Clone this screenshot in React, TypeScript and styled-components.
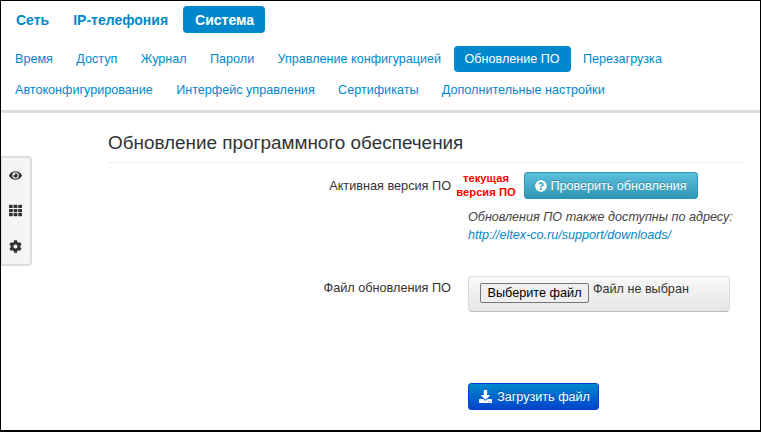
import React from "react";
import styled, { createGlobalStyle } from "styled-components";
import { FaEye, FaTh, FaCog, FaQuestionCircle, FaDownload } from "react-icons/fa";

const GlobalStyle = createGlobalStyle`
  html, body { margin: 0; padding: 0; background: #fff; }
  body { font-family: "Liberation Sans", Arial, sans-serif; font-size: 13px; color: #333; }
`;

const Frame = styled.div`
  width: 761px;
  height: 432px;
  box-sizing: border-box;
  border-style: solid;
  border-color: #000;
  border-width: 1px 1px 2px 1px;
  overflow: hidden;
  display: flex;
  flex-direction: column;
`;

const Header = styled.header`
  height: 112px;
  box-sizing: border-box;
  flex: none;
  border-bottom: 3px solid #ddd;
  padding: 5px 0 0 3px;
`;

const MainNav = styled.nav`
  display: flex;
  height: 27px;
  margin-bottom: 13px;
`;

const MainTab = styled.a<{ $active?: boolean }>`
  display: flex;
  align-items: center;
  padding: 0 ${(p) => (p.$active ? "11px" : "12px")} 0 12px;
  margin-left: ${(p) => (p.$active ? "3px" : "0")};
  border-radius: 4px;
  font-weight: bold;
  font-size: 14px;
  color: ${(p) => (p.$active ? "#fff" : "#0088cc")};
  background: ${(p) => (p.$active ? "#0088cc" : "transparent")};
`;

const SubNav = styled.nav`
  display: flex;
  flex-wrap: wrap;
  width: 700px;
  row-gap: 5px;
  column-gap: 1.4px;
`;

const SubTab = styled.a<{ $active?: boolean }>`
  display: flex;
  align-items: center;
  height: 26px;
  padding: 0 11px;
  border-radius: 4px;
  font-size: 12.6px;
  color: ${(p) => (p.$active ? "#fff" : "#0088cc")};
  background: ${(p) => (p.$active ? "#0088cc" : "transparent")};
`;

const Body = styled.main`
  position: relative;
  flex: 1;
  padding: 15px 16px 0 107px;
`;

const SidePanel = styled.aside`
  position: absolute;
  left: -1px;
  top: 43px;
  width: 32px;
  height: 110px;
  box-sizing: border-box;
  background: #f5f5f5;
  border: 2px solid #ddd;
  border-radius: 0 4px 4px 0;
  display: flex;
  flex-direction: column;
  align-items: center;
  justify-content: space-around;
  padding: 0 2px 0 0;
  color: #333;
  font-size: 13px;
`;

const Title = styled.h2`
  margin: 0;
  font-size: 18.9px;
  font-weight: normal;
  line-height: 30px;
  color: #333;
  border-bottom: 1px solid #eee;
  height: 35px;
  box-sizing: border-box;
`;

const FormRow = styled.div`
  display: grid;
  grid-template-columns: 343px 1fr;
  column-gap: 17px;
`;

const Label = styled.label`
  text-align: right;
  font-size: 12.7px;
  line-height: 18px;
  color: #333;
`;

const VersionRow = styled(FormRow)`
  margin-top: 9px;
  position: relative;
`;

const VersionLabel = styled(Label)`
  padding-top: 5px;
`;

const CurrentNote = styled.div`
  position: absolute;
  left: 348px;
  top: -1px;
  width: 60px;
  text-align: center;
  white-space: nowrap;
  color: #f00;
  font-family: "Liberation Sans", Arial, sans-serif;
  font-weight: bold;
  font-size: 11.2px;
  line-height: 14px;
`;

const CheckButton = styled.button`
  display: flex;
  align-items: center;
  justify-content: center;
  gap: 3px;
  width: 174px;
  height: 27px;
  margin-left: 56px;
  padding: 0;
  border: 1px solid #2f96b4;
  border-radius: 3px;
  background: linear-gradient(#5bc0de, #2f96b4);
  color: #fff;
  font: 12.6px "Liberation Sans", Arial, sans-serif;
  text-shadow: 0 -1px 0 rgba(0, 0, 0, 0.25);
`;

const Help = styled.p`
  grid-column: 2;
  margin: 9px 0 0;
  font-style: italic;
  font-size: 12.6px;
  line-height: 18px;
  color: #444;
  white-space: nowrap;
`;

const HelpLink = styled.a`
  color: #0088cc;
`;

const FileRow = styled(FormRow)`
  margin-top: 32px;
`;

const FileLabel = styled(Label)`
  padding-top: 3px;
`;

const FileWell = styled.div`
  width: 262px;
  height: 36px;
  box-sizing: border-box;
  padding: 6px 11px;
  display: flex;
  align-items: flex-start;
  gap: 4px;
  background: linear-gradient(#f8f8f8, #e6e6e6);
  border: 1px solid #ddd;
  border-bottom-color: #bbb;
  border-radius: 4px;
  font-size: 12.6px;
  line-height: 13px;
  color: #333;
`;

const ChooseButton = styled.button`
  width: 109px;
  height: 20px;
  padding: 0;
  border: 1px solid #767676;
  border-radius: 2px;
  background: #efefef;
  color: #000;
  font: 12.7px "Liberation Sans", Arial, sans-serif;
`;

const SubmitRow = styled(FormRow)`
  margin-top: 71px;
`;

const UploadButton = styled.button`
  grid-column: 2;
  display: flex;
  align-items: center;
  justify-content: center;
  gap: 5px;
  width: 131px;
  height: 27px;
  padding: 0 0 0 2px;
  border: 1px solid #0044cc;
  border-radius: 3px;
  background: linear-gradient(#0088cc, #0044cc);
  color: #fff;
  font: 12.6px "Liberation Sans", Arial, sans-serif;
  text-shadow: 0 -1px 0 rgba(0, 0, 0, 0.25);
`;

const subTabs = [
  "Время",
  "Доступ",
  "Журнал",
  "Пароли",
  "Управление конфигурацией",
  "Обновление ПО",
  "Перезагрузка",
  "Автоконфигурирование",
  "Интерфейс управления",
  "Сертификаты",
  "Дополнительные настройки",
];

export default function App() {
  return (
    <>
      <GlobalStyle />
      <Frame>
        <Header>
          <MainNav>
            <MainTab>Сеть</MainTab>
            <MainTab>IP-телефония</MainTab>
            <MainTab $active>Система</MainTab>
          </MainNav>
          <SubNav>
            {subTabs.map((t) => (
              <SubTab key={t} $active={t === "Обновление ПО"}>
                {t}
              </SubTab>
            ))}
          </SubNav>
        </Header>
        <Body>
          <SidePanel>
            <FaEye />
            <FaTh />
            <FaCog />
          </SidePanel>
          <Title>Обновление программного обеспечения</Title>
          <VersionRow>
            <VersionLabel>Активная версия ПО</VersionLabel>
            <CheckButton>
              <FaQuestionCircle size={12} />
              Проверить обновления
            </CheckButton>
            <CurrentNote>
              текущая
              <br />
              версия ПО
            </CurrentNote>
            <Help>
              Обновления ПО также доступны по адресу:
              <br />
              <HelpLink>http://eltex-co.ru/support/downloads/</HelpLink>
            </Help>
          </VersionRow>
          <FileRow>
            <FileLabel>Файл обновления ПО</FileLabel>
            <FileWell>
              <ChooseButton>Выберите файл</ChooseButton>
              Файл не выбран
            </FileWell>
          </FileRow>
          <SubmitRow>
            <UploadButton>
              <FaDownload size={13} />
              Загрузить файл
            </UploadButton>
          </SubmitRow>
        </Body>
      </Frame>
    </>
  );
}
